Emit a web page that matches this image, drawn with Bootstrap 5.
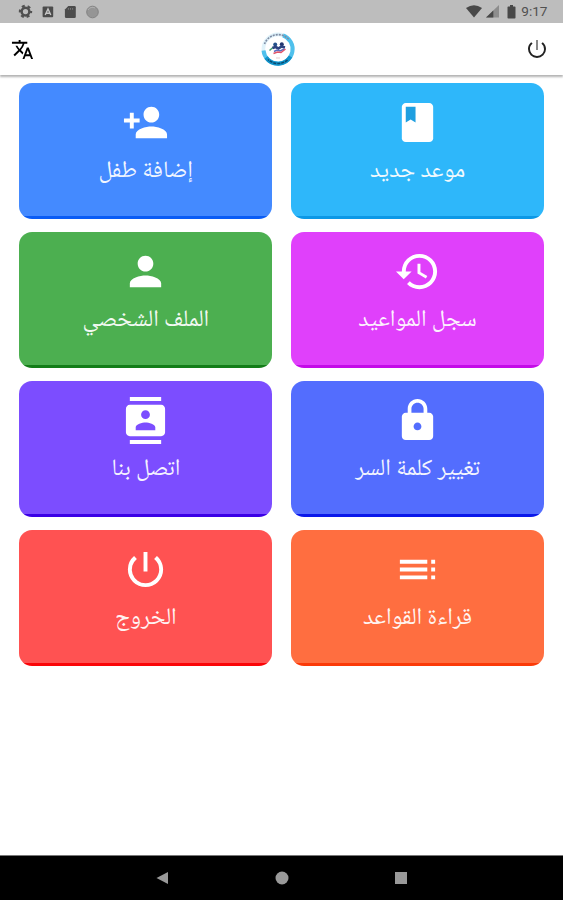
<!DOCTYPE html>
<html lang="ar">
<head>
<meta charset="utf-8">
<meta name="viewport" content="width=device-width, initial-scale=1">
<title>المواعيد</title>
<link href="https://cdn.jsdelivr.net/npm/bootstrap@5.3.0/dist/css/bootstrap.min.css" rel="stylesheet">
<style>
body{font-family:"Noto Naskh Arabic UI","Noto Sans Arabic UI","Noto Naskh Arabic","Noto Sans Arabic","DejaVu Sans",sans-serif;height:900px;overflow:hidden}
svg{display:block;flex:none}
.status{height:23px;background:#bdbdbd;color:#484848;padding:0 15.500px 0 17.5px}
.clock{font:400 13.600px/23px Roboto,sans-serif;color:#505050;margin-left:5.500px}
.topbar{height:52px;padding:0 14px 0 11px;box-shadow:0 2px 2px rgba(0,0,0,.3);z-index:1}
.crest{margin-right:3px}
.tiles{display:grid;grid-template-columns:253px 253px;grid-auto-rows:136.3px;gap:12.8px 18.7px;padding:7.6px 0 0 19.4px}
.tile{border-radius:13px;background:linear-gradient(to top,var(--edge) 3px,var(--face) 3.500px);padding-top:16.200px;overflow:hidden}
.label{font-size:23.5px;line-height:34px;margin-top:8.400px;color:#fff;opacity:.93;white-space:nowrap}
.c1{--face:#448aff;--edge:#0a5cf5}.c2{--face:#2eb7fa;--edge:#0c98e6}
.c3{--face:#4caf50;--edge:#137d18}.c4{--face:#e040fb;--edge:#c40ae8}
.c5{--face:#7c4dff;--edge:#3b00e6}.c6{--face:#536dfe;--edge:#0a18ea}
.c7{--face:#ff5252;--edge:#fa0508}.c8{--face:#ff6e40;--edge:#fb3a08}
.navkeys{height:45px;background:#000;border-top:1px solid #777;padding:0 155px}
</style>
<script src="https://cdn.jsdelivr.net/npm/bootstrap@5.3.0/dist/js/bootstrap.bundle.min.js"></script>
</head>
<body class="d-flex flex-column bg-white">
<div class="status d-flex align-items-center justify-content-between">
  <div class="d-flex align-items-center gap-2">
    <svg width="15" height="15" viewBox="0 0 24 24" fill="none" stroke="#505050"><circle cx="12" cy="12" r="6.2" stroke-width="4"/><circle cx="12" cy="12" r="9" stroke-width="3.4" stroke-dasharray="4.7 4.72" stroke-dashoffset="2.3"/></svg>
    <svg width="14" height="14" viewBox="0 0 14 14"><rect x="1.6" y="1.5" width="10.6" height="10.8" rx="1" fill="#4c4c4c"/><path d="M4.2 10 7 4l2.8 6M5.2 8.2h3.6" fill="none" stroke="#c6c6c6" stroke-width="1.4"/></svg>
    <svg width="14" height="14" viewBox="0 0 14 14"><path d="M5.3 1h6.2q1.3 0 1.3 1.3v9.4q0 1.3-1.3 1.3H3.2q-1.3 0-1.3-1.3V4.4z" fill="#4c4c4c"/><path d="M5.4 3v1.8M7.5 3v1.8M9.6 3v1.8" stroke="#777" stroke-width="1"/></svg>
    <svg width="14" height="14" viewBox="0 0 14 14"><circle cx="7.5" cy="7" r="5.8" fill="#959595" stroke="#838383"/><path d="M3 5a5 5 0 0 1 7-2" fill="none" stroke="#b0b0b0"/></svg>
  </div>
  <div class="d-flex align-items-center">
    <svg width="16" height="13" viewBox="0 0 16 13"><path d="M0 3Q8-2.6 16 3L8 12.6z" fill="#484848"/></svg>
    <svg class="ms-1" width="13" height="13" viewBox="0 0 13 13"><path d="M13 0v12.5H0z" fill="#8d8d8d"/><path d="M7.3 5.5v7H0z" fill="#484848"/></svg>
    <svg class="ms-2" width="9" height="14" viewBox="0 0 9 14"><path d="M3 0h3v1.4h1.7q.8 0 .8.8v10.5q0 .8-.8.8H1.3q-.8 0-.8-.8V2.2q0-.8.8-.8H3z" fill="#484848"/></svg>
    <span class="clock">9:17</span>
  </div>
</div>
<header class="topbar bg-white d-flex align-items-center justify-content-between position-relative">
  <svg width="23" height="23" viewBox="0 0 24 24"><path d="M12.87 15.07l-2.54-2.51.03-.03A17.52 17.52 0 0 0 14.07 6H17V4h-7V2H8v2H1v1.99h11.17C11.5 7.92 10.44 9.75 9 11.35 8.07 10.32 7.3 9.19 6.69 8h-2c.73 1.63 1.73 3.17 2.98 4.56l-5.09 5.02L4 19l5-5 3.11 3.11.76-2.04zM18.5 10h-2L12 22h2l1.12-3h4.75L21 22h2l-4.5-12zm-2.62 7l1.62-4.33L19.12 17h-3.24z"/></svg>
  <svg class="crest" width="36" height="36" viewBox="0 0 36 36" fill="none">
    <circle cx="18" cy="18" r="14.6" stroke="#dff2fa" stroke-width="3.6"/>
    <path d="M23 4.300A14.6 14.6 0 1 1 3.5 19.5" stroke="#4fc0ec" stroke-width="4"/>
    <path d="M30.500 25.500A14.6 14.6 0 0 1 6 26.5" stroke="#1193ca" stroke-width="4"/>
    <path d="M27.5 29A14.6 14.6 0 0 1 8 28.5" stroke="#0a4a70" stroke-width="1.6" stroke-dasharray="3 1"/>
    <path d="M4.5 13A14.6 14.6 0 0 1 29 8.5" stroke="#7f8ba3" stroke-width="1.600" stroke-dasharray="2 1"/>
    <path d="m9.5 19.5 4-3.5" stroke="#3fa070" stroke-width="1.500"/>
    <circle cx="15.2" cy="13.6" r="2" fill="#24508a"/><circle cx="21.8" cy="13.300" r="2" fill="#24366f"/>
    <path d="m12.500 17 3-1 3 1.500 3-2 3.500 1" stroke="#2d4380" stroke-width="2.600"/>
    <path d="m14 20.500 3-1.500 3 1 4.500-2" stroke="#5a6cc0" stroke-width="1.400"/><path d="m13.500 22.500 4-1.500 3.500.500 4.500-3.500" stroke="#e0556a" stroke-width="1.500"/>
    <path d="M16 27h4" stroke="#e3cdd0"/>
  </svg>
  <svg width="24" height="24" viewBox="0 0 24 24"><path fill="#222" d="M17.83 5.17l-1.42 1.42A6.92 6.92 0 0 1 19 12c0 3.87-3.13 7-7 7A6.995 6.995 0 0 1 7.58 6.58L6.17 5.17A8.932 8.932 0 0 0 3 12a9 9 0 0 0 18 0c0-2.74-1.23-5.18-3.17-6.83z"/><path fill="#888" d="M13 3h-2v10h2z"/></svg>
</header>
<main class="tiles flex-grow-1 align-content-start">
  <div class="tile c1 d-flex flex-column align-items-center"><svg width="47" height="47" viewBox="0 0 24 24" fill="#fff"><path d="M15 12c2.21 0 4-1.79 4-4s-1.79-4-4-4-4 1.79-4 4 1.79 4 4 4zm-9-2V7H4v3H1v2h3v3h2v-3h3v-2H6zm9 4c-2.67 0-8 1.34-8 4v2h16v-2c0-2.66-5.33-4-8-4z"/></svg><div class="label" dir="rtl">إضافة طفل</div></div>
  <div class="tile c2 d-flex flex-column align-items-center"><svg width="47" height="47" viewBox="0 0 24 24" fill="#fff"><path d="M18 2H6c-1.1 0-2 .9-2 2v16c0 1.1.9 2 2 2h12c1.1 0 2-.9 2-2V4c0-1.1-.9-2-2-2z"/><path fill="#1f9fe0" d="M6 4h5v8l-2.500-1.500L6 12z"/></svg><div class="label" dir="rtl">موعد جديد</div></div>
  <div class="tile c3 d-flex flex-column align-items-center"><svg width="47" height="47" viewBox="0 0 24 24" fill="#fff"><path d="M12 12c2.210 0 4-1.790 4-4s-1.790-4-4-4-4 1.790-4 4 1.790 4 4 4zm0 2c-2.670 0-8 1.340-8 4v2h16v-2c0-2.660-5.330-4-8-4z"/></svg><div class="label" dir="rtl">الملف الشخصي</div></div>
  <div class="tile c4 d-flex flex-column align-items-center"><svg width="47" height="47" viewBox="0 0 24 24" fill="#fff"><path d="M13 3a9 9 0 0 0-9 9H1l3.960 3.960L9 12H6c0-3.870 3.130-7 7-7s7 3.130 7 7-3.130 7-7 7c-1.930 0-3.680-.790-4.940-2.060l-1.420 1.420C8.270 19.990 10.510 21 13 21a9 9 0 0 0 0-18zm-1 5v5l4.280 2.540.720-1.210-3.500-2.080V8H12z"/></svg><div class="label" dir="rtl">سجل المواعيد</div></div>
  <div class="tile c5 d-flex flex-column align-items-center"><svg width="47" height="47" viewBox="0 0 24 24" fill="#fff"><path d="M20 0H4v2h16V0zM4 24h16v-2H4v2zM20 4H4c-1.100 0-2 .900-2 2v12c0 1.100.900 2 2 2h16c1.100 0 2-.900 2-2V6c0-1.100-.900-2-2-2zm-8 2.750c1.240 0 2.250 1.010 2.250 2.250s-1.010 2.250-2.250 2.250S9.750 10.240 9.750 9 10.760 6.750 12 6.750zM17 17H7v-1.500c0-1.670 3.330-2.500 5-2.500s5 .830 5 2.500V17z"/></svg><div class="label" dir="rtl">اتصل بنا</div></div>
  <div class="tile c6 d-flex flex-column align-items-center"><svg width="47" height="47" viewBox="0 0 24 24" fill="#fff"><path d="M18 8h-1V6c0-2.760-2.240-5-5-5S7 3.240 7 6v2H6c-1.100 0-2 .900-2 2v10c0 1.100.900 2 2 2h12c1.100 0 2-.900 2-2V10c0-1.100-.900-2-2-2zm-6 9c-1.100 0-2-.900-2-2s.900-2 2-2 2 .900 2 2-.900 2-2 2zm3.100-9H8.900V6c0-1.710 1.390-3.100 3.100-3.100s3.100 1.390 3.100 3.100v2z"/></svg><div class="label" dir="rtl">تغيير كلمة السر</div></div>
  <div class="tile c7 d-flex flex-column align-items-center"><svg width="47" height="47" viewBox="0 0 24 24" fill="#fff"><path d="M13 3h-2v10h2V3zm4.830 2.170l-1.420 1.420A6.920 6.920 0 0 1 19 12c0 3.870-3.130 7-7 7A6.995 6.995 0 0 1 7.580 6.580L6.170 5.170A8.932 8.932 0 0 0 3 12a9 9 0 0 0 18 0c0-2.740-1.230-5.180-3.170-6.830z"/></svg><div class="label" dir="rtl">الخروج</div></div>
  <div class="tile c8 d-flex flex-column align-items-center"><svg width="47" height="47" viewBox="0 0 24 24" fill="#fff"><path d="M3 9h14V7H3v2zm0 4h14v-2H3v2zm0 4h14v-2H3v2zm16 0h2v-2h-2v2zm0-10v2h2V7h-2zm0 6h2v-2h-2v2z"/></svg><div class="label" dir="rtl">قراءة القواعد</div></div>
</main>
<nav class="navkeys d-flex align-items-center justify-content-between">
  <svg width="14" height="14" viewBox="0 0 14 14"><path d="M13 1v12L1.500 7z" fill="#999"/></svg>
  <svg width="14" height="14" viewBox="0 0 14 14"><circle cx="7" cy="7" r="6.500" fill="#999"/></svg>
  <svg width="14" height="14" viewBox="0 0 14 14"><rect x="1" y="1" width="12" height="12" fill="#999"/></svg>
</nav>
</body>
</html>
